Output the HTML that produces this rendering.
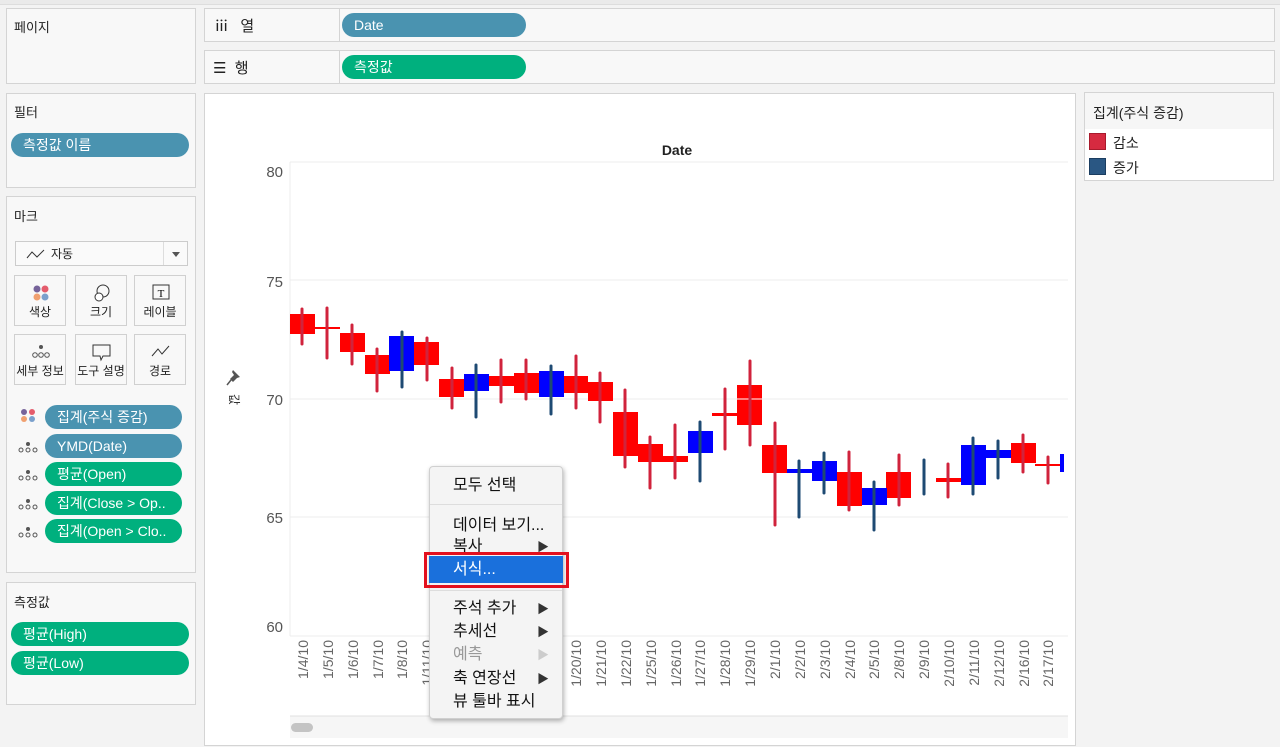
<!DOCTYPE html>
<html><head><meta charset="utf-8">
<style>
*{margin:0;padding:0;box-sizing:border-box}
body{width:1280px;height:747px;background:#f3f3f3;font-family:"Liberation Sans","Noto Sans CJK KR",sans-serif;font-size:13px;color:#222;position:relative;overflow:hidden}
.p{position:absolute;background:#f8f8f8;border:1px solid #d4d4d4}
.t{position:absolute;font-size:13px;color:#222}
.pill{position:absolute;height:24px;border-radius:12px;color:#fff;font-size:14px;line-height:24px;padding-left:12px;white-space:nowrap;overflow:hidden}
.b{background:#4a93b0}.g{background:#00b07e}
.btn{position:absolute;width:52px;height:51px;border:1px solid #d0d0d0;background:#f8f8f8;font-size:12px;text-align:center}
.btn span{position:absolute;left:0;right:0;bottom:5px}
.btn svg{position:absolute;left:14px;top:7px}
.mi{position:absolute;left:23px;font-size:16px;color:#111}
.ar{position:absolute;left:107px;font-size:12px;color:#333}
</style></head><body>
<div style="position:absolute;left:0;top:0;width:1280px;height:5px;background:#eaeaea;border-bottom:1px solid #ddd"></div>
<div class="p" style="left:6px;top:8px;width:190px;height:76px"><div class="t" style="left:7px;top:8px">페이지</div></div>
<div class="p" style="left:204px;top:8px;width:1071px;height:34px"><div style="position:absolute;left:134px;top:0;bottom:0;border-left:1px solid #d4d4d4"></div>
<div class="t" style="left:9px;top:6px;font-size:15px;letter-spacing:1px">ⅲ&nbsp;&nbsp;열</div></div>
<div class="pill b" style="left:342px;top:13px;width:184px">Date</div>
<div class="p" style="left:204px;top:50px;width:1071px;height:34px"><div style="position:absolute;left:134px;top:0;bottom:0;border-left:1px solid #d4d4d4"></div>
<div class="t" style="left:8px;top:6px;font-size:15px">☰&nbsp;&nbsp;행</div></div>
<div class="pill g" style="left:342px;top:55px;width:184px">측정값</div>

<div class="p" style="left:6px;top:93px;width:190px;height:95px"><div class="t" style="left:7px;top:8px">필터</div></div>
<div class="pill b" style="left:11px;top:133px;width:178px">측정값 이름</div>

<div class="p" style="left:6px;top:196px;width:190px;height:377px"><div class="t" style="left:7px;top:9px">마크</div>
<div style="position:absolute;left:8px;top:44px;width:173px;height:25px;border:1px solid #ccc;background:#fafafa">
<svg width="20" height="12" style="position:absolute;left:10px;top:6px"><path d="M1 10 L6 4 L11 9 L18 2" stroke="#333" fill="none"/></svg>
<span style="position:absolute;left:35px;top:3px;font-size:12px">자동</span>
<div style="position:absolute;left:147px;top:0;bottom:0;border-left:1px solid #ddd"></div>
<div style="position:absolute;left:156px;top:10px;border:4px solid transparent;border-top:5px solid #555"></div></div>
</div>
<div class="btn" style="left:14px;top:275px"><svg width="24" height="24"><circle cx="8" cy="6" r="3.5" fill="#76639a"/><circle cx="16" cy="6" r="3.5" fill="#e45c6c"/><circle cx="8" cy="14" r="3.5" fill="#f0a070"/><circle cx="16" cy="14" r="3.5" fill="#7aa0cc"/></svg><span>색상</span></div>
<div class="btn" style="left:75px;top:275px"><svg width="24" height="24"><circle cx="13" cy="8" r="6" stroke="#333" fill="none"/><circle cx="9" cy="14" r="4" stroke="#333" fill="#fff"/></svg><span>크기</span></div>
<div class="btn" style="left:134px;top:275px"><svg width="24" height="24"><rect x="4" y="2" width="16" height="14" stroke="#333" fill="none"/><text x="12" y="14" font-size="11" text-anchor="middle" font-family="Liberation Serif">T</text></svg><span>레이블</span></div>
<div class="btn" style="left:14px;top:334px"><svg width="24" height="24"><circle cx="12" cy="5" r="2" fill="#555"/><circle cx="6" cy="13" r="2.3" stroke="#555" fill="none"/><circle cx="12" cy="13" r="2.3" stroke="#555" fill="none"/><circle cx="18" cy="13" r="2.3" stroke="#555" fill="none"/></svg><span>세부 정보</span></div>
<div class="btn" style="left:75px;top:334px"><svg width="24" height="24"><path d="M3 3 H20 V14 H13 L11 18 L10 14 H3 Z" stroke="#333" fill="none"/></svg><span>도구 설명</span></div>
<div class="btn" style="left:134px;top:334px"><svg width="24" height="24"><path d="M3 14 L9 7 L13 12 L20 4" stroke="#333" fill="none"/></svg><span>경로</span></div>

<svg width="30" height="140" style="position:absolute;left:16px;top:405px">
<circle cx="8" cy="7" r="3" fill="#76639a"/><circle cx="16" cy="7" r="3" fill="#e45c6c"/><circle cx="8" cy="14" r="3" fill="#f0a070"/><circle cx="16" cy="14" r="3" fill="#7aa0cc"/>
<g fill="none" stroke="#555"><circle cx="5" cy="45" r="2"/><circle cx="12" cy="45" r="2"/><circle cx="19" cy="45" r="2"/>
<circle cx="5" cy="73" r="2"/><circle cx="12" cy="73" r="2"/><circle cx="19" cy="73" r="2"/>
<circle cx="5" cy="102" r="2"/><circle cx="12" cy="102" r="2"/><circle cx="19" cy="102" r="2"/>
<circle cx="5" cy="130" r="2"/><circle cx="12" cy="130" r="2"/><circle cx="19" cy="130" r="2"/></g>
<g fill="#555"><circle cx="12" cy="39" r="2"/><circle cx="12" cy="67" r="2"/><circle cx="12" cy="96" r="2"/><circle cx="12" cy="124" r="2"/></g>
</svg>
<div class="pill b" style="left:45px;top:405px;width:137px">집계(주식 증감)</div>
<div class="pill b" style="left:45px;top:434px;width:137px">YMD(Date)</div>
<div class="pill g" style="left:45px;top:462px;width:137px">평균(Open)</div>
<div class="pill g" style="left:45px;top:491px;width:137px">집계(Close &gt; Op..</div>
<div class="pill g" style="left:45px;top:519px;width:137px">집계(Open &gt; Clo..</div>

<div class="p" style="left:6px;top:582px;width:190px;height:123px"><div class="t" style="left:7px;top:9px">측정값</div></div>
<div class="pill g" style="left:11px;top:622px;width:178px">평균(High)</div>
<div class="pill g" style="left:11px;top:651px;width:178px">평균(Low)</div>

<div class="p" style="left:204px;top:93px;width:872px;height:653px;background:#fff"></div>
<svg width="1280" height="747" style="position:absolute;left:0;top:0">
<text x="677" y="155" font-size="14" font-weight="bold" text-anchor="middle" fill="#222" font-family="Liberation Sans">Date</text>
<g stroke="#ececec" stroke-width="1"><line x1="290" y1="162" x2="1068" y2="162"/><line x1="290" y1="280" x2="1068" y2="280"/><line x1="290" y1="399" x2="1068" y2="399"/><line x1="290" y1="517" x2="1068" y2="517"/><line x1="290" y1="636" x2="1068" y2="636"/><line x1="290" y1="162" x2="290" y2="636"/></g>
<g font-size="15" fill="#555" font-family="Liberation Sans" text-anchor="end"><text x="283" y="177">80</text><text x="283" y="287">75</text><text x="283" y="405">70</text><text x="283" y="523">65</text><text x="283" y="632">60</text></g>
<g fill="#555"><path d="M233 370 L240 377 L237 378 L233 382 L230 379 L234 375 L232 372 Z"/><line x1="231" y1="380" x2="227" y2="385" stroke="#555" stroke-width="1.5"/></g>
<text transform="translate(230,394) rotate(90)" font-size="12" fill="#333" font-family="Noto Sans CJK KR">값</text>
<g fill="#ff0000">
<rect x="290" y="314" width="25" height="20"/><rect x="315" y="327" width="25" height="2"/><rect x="340" y="333" width="25" height="19"/><rect x="365" y="355" width="25" height="19"/>
<rect x="414" y="342" width="25" height="23"/><rect x="439" y="379" width="25" height="18"/><rect x="489" y="376" width="25" height="10"/><rect x="514" y="373" width="25" height="20"/>
<rect x="563" y="376" width="25" height="17"/><rect x="588" y="382" width="25" height="19"/><rect x="613" y="412" width="25" height="44"/><rect x="638" y="444" width="25" height="18"/>
<rect x="663" y="456" width="25" height="6"/><rect x="712" y="413" width="25" height="3"/><rect x="737" y="385" width="25" height="40"/><rect x="762" y="445" width="25" height="28"/>
<rect x="837" y="472" width="25" height="34"/><rect x="886" y="472" width="25" height="26"/><rect x="936" y="478" width="25" height="4"/><rect x="1011" y="443" width="25" height="20"/><rect x="1035" y="464" width="25" height="2"/>
</g>
<g fill="#0000ff">
<rect x="389" y="336" width="25" height="35"/><rect x="464" y="374" width="25" height="17"/><rect x="539" y="371" width="25" height="26"/><rect x="688" y="431" width="25" height="22"/>
<rect x="787" y="469" width="25" height="4"/><rect x="812" y="461" width="25" height="20"/><rect x="862" y="488" width="25" height="17"/><rect x="961" y="445" width="25" height="40"/><rect x="986" y="450" width="25" height="8"/><rect x="1060" y="454" width="4" height="18"/>
</g>
<line x1="737" y1="399" x2="762" y2="399" stroke="#fff"/>
<g stroke="#d0233c" stroke-width="3" stroke-linecap="round">
<line x1="302" y1="309" x2="302" y2="344"/><line x1="327" y1="308" x2="327" y2="358"/><line x1="352" y1="325" x2="352" y2="364"/><line x1="377" y1="349" x2="377" y2="391"/>
<line x1="427" y1="338" x2="427" y2="380"/><line x1="452" y1="368" x2="452" y2="408"/><line x1="501" y1="360" x2="501" y2="402"/><line x1="526" y1="360" x2="526" y2="399"/>
<line x1="576" y1="356" x2="576" y2="408"/><line x1="600" y1="373" x2="600" y2="422"/><line x1="625" y1="390" x2="625" y2="467"/><line x1="650" y1="437" x2="650" y2="488"/>
<line x1="675" y1="425" x2="675" y2="478"/><line x1="725" y1="389" x2="725" y2="449"/><line x1="750" y1="361" x2="750" y2="445"/><line x1="775" y1="423" x2="775" y2="525"/>
<line x1="849" y1="452" x2="849" y2="510"/><line x1="899" y1="455" x2="899" y2="505"/><line x1="948" y1="464" x2="948" y2="497"/><line x1="1023" y1="435" x2="1023" y2="472"/><line x1="1048" y1="457" x2="1048" y2="483"/>
</g>
<g stroke="#1e4a73" stroke-width="3" stroke-linecap="round">
<line x1="402" y1="332" x2="402" y2="387"/><line x1="476" y1="365" x2="476" y2="417"/><line x1="551" y1="366" x2="551" y2="414"/><line x1="700" y1="422" x2="700" y2="481"/>
<line x1="799" y1="461" x2="799" y2="517"/><line x1="824" y1="453" x2="824" y2="493"/><line x1="874" y1="482" x2="874" y2="530"/><line x1="924" y1="460" x2="924" y2="494"/><line x1="973" y1="438" x2="973" y2="494"/><line x1="998" y1="441" x2="998" y2="478"/>
</g>
<g font-size="14" fill="#666" font-family="Liberation Sans" text-anchor="end">
<text transform="translate(308,640) rotate(-90)">1/4/10</text><text transform="translate(333,640) rotate(-90)">1/5/10</text><text transform="translate(358,640) rotate(-90)">1/6/10</text><text transform="translate(383,640) rotate(-90)">1/7/10</text><text transform="translate(407,640) rotate(-90)">1/8/10</text><text transform="translate(432,640) rotate(-90)">1/11/10</text>
<text transform="translate(581,640) rotate(-90)">1/20/10</text><text transform="translate(606,640) rotate(-90)">1/21/10</text><text transform="translate(631,640) rotate(-90)">1/22/10</text><text transform="translate(656,640) rotate(-90)">1/25/10</text><text transform="translate(681,640) rotate(-90)">1/26/10</text><text transform="translate(705,640) rotate(-90)">1/27/10</text><text transform="translate(730,640) rotate(-90)">1/28/10</text><text transform="translate(755,640) rotate(-90)">1/29/10</text>
<text transform="translate(780,640) rotate(-90)">2/1/10</text><text transform="translate(805,640) rotate(-90)">2/2/10</text><text transform="translate(830,640) rotate(-90)">2/3/10</text><text transform="translate(855,640) rotate(-90)">2/4/10</text><text transform="translate(879,640) rotate(-90)">2/5/10</text><text transform="translate(904,640) rotate(-90)">2/8/10</text><text transform="translate(929,640) rotate(-90)">2/9/10</text><text transform="translate(954,640) rotate(-90)">2/10/10</text><text transform="translate(979,640) rotate(-90)">2/11/10</text><text transform="translate(1004,640) rotate(-90)">2/12/10</text><text transform="translate(1029,640) rotate(-90)">2/16/10</text><text transform="translate(1053,640) rotate(-90)">2/17/10</text>
</g>
<rect x="290" y="716" width="778" height="22" fill="#f6f6f6"/>
<line x1="290" y1="716" x2="1068" y2="716" stroke="#e0e0e0"/>
<rect x="291" y="723" width="22" height="9" rx="4.5" fill="#c4c4c4"/>
</svg>

<div style="position:absolute;left:429px;top:466px;width:134px;height:253px;background:#f4f4f4;border:1px solid #d0d0d0;border-radius:4px;box-shadow:1px 2px 5px rgba(0,0,0,.3)">
<div class="mi" style="top:4px">모두 선택</div>
<div style="position:absolute;left:0;right:0;top:37px;border-top:1px solid #ddd"></div>
<div class="mi" style="top:44px">데이터 보기...</div>
<div class="mi" style="top:65px">복사</div><div class="ar" style="top:71px">▶</div>
<div style="position:absolute;left:-1px;top:89px;width:134px;height:27px;background:#1a70dc"></div>
<div class="mi" style="top:88px;color:#fff">서식...</div>
<div style="position:absolute;left:0;right:0;top:123px;border-top:1px solid #ddd"></div>
<div class="mi" style="top:127px">주석 추가</div><div class="ar" style="top:133px">▶</div>
<div class="mi" style="top:150px">추세선</div><div class="ar" style="top:156px">▶</div>
<div class="mi" style="top:173px;color:#999">예측</div><div class="ar" style="top:179px;color:#ccc">▶</div>
<div class="mi" style="top:197px">축 연장선</div><div class="ar" style="top:203px">▶</div>
<div class="mi" style="top:220px">뷰 툴바 표시</div>
</div>
<div style="position:absolute;left:424px;top:552px;width:145px;height:36px;border:3px solid #e3101e"></div>

<div class="p" style="left:1084px;top:92px;width:190px;height:89px;background:#f6f6f6">
<div class="t" style="left:8px;top:10px;font-size:14px">집계(주식 증감)</div>
<div style="position:absolute;left:0;right:0;top:36px;bottom:0;background:#fff"></div>
<div style="position:absolute;left:4px;top:40px;width:17px;height:17px;background:#d62a40;border:1px solid #a81a2c"></div>
<div class="t" style="left:28px;top:40px;font-size:14px">감소</div>
<div style="position:absolute;left:4px;top:65px;width:17px;height:17px;background:#2a5783;border:1px solid #1b3d60"></div>
<div class="t" style="left:28px;top:65px;font-size:14px">증가</div>
</div>
</body></html>
